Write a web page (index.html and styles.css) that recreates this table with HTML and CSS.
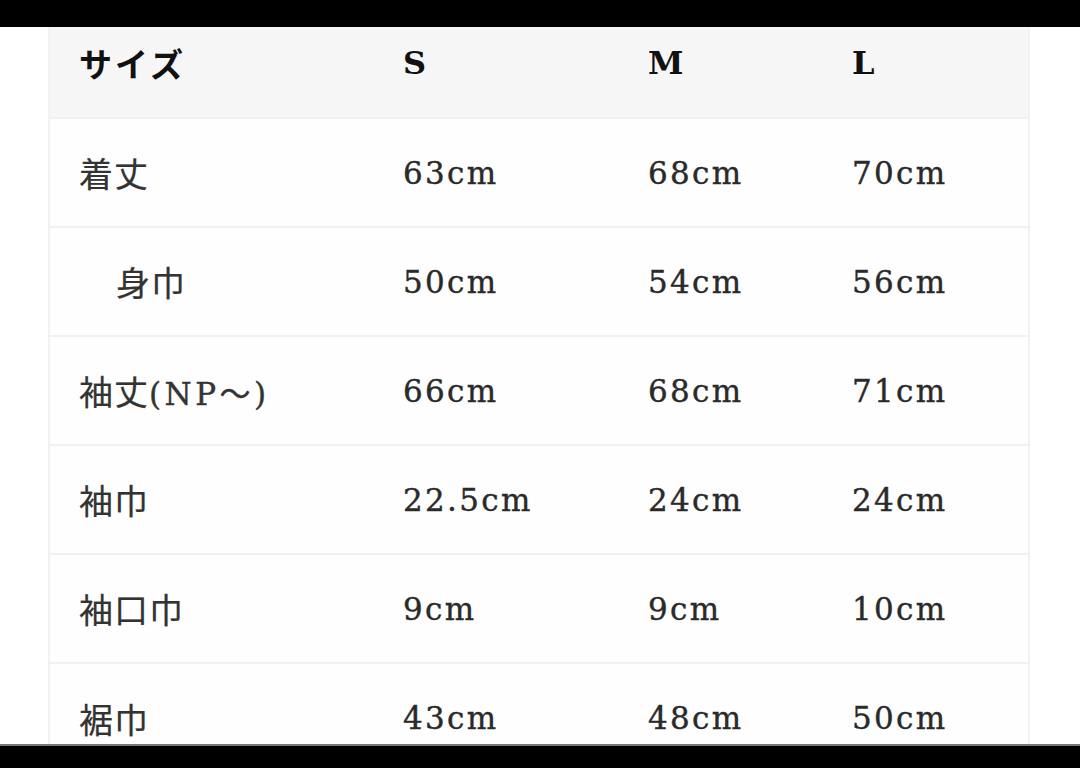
FILE: index.html
```html
<!DOCTYPE html>
<html lang="ja">
<head>
<meta charset="utf-8">
<title>サイズ表</title>
<link rel="stylesheet" href="styles.css">
</head>
<body>
<div class="frame">
  <div class="bar-top"></div>
  <div class="content">
    <table class="size-table">
      <thead>
        <tr class="head-row">
          <th class="c1">サイズ</th><th class="c2">S</th><th class="c3">M</th><th class="c4">L</th>
        </tr>
      </thead>
      <tbody>
        <tr><td class="label">着丈</td><td>63cm</td><td>68cm</td><td>70cm</td></tr>
        <tr><td class="label indent">身巾</td><td>50cm</td><td>54cm</td><td>56cm</td></tr>
        <tr><td class="label">袖丈<span class="lat">(NP～)</span></td><td>66cm</td><td>68cm</td><td>71cm</td></tr>
        <tr><td class="label">袖巾</td><td>22.5cm</td><td>24cm</td><td>24cm</td></tr>
        <tr><td class="label">袖口巾</td><td>9cm</td><td>9cm</td><td>10cm</td></tr>
        <tr class="last"><td class="label">裾巾</td><td>43cm</td><td>48cm</td><td>50cm</td></tr>
      </tbody>
    </table>
  </div>
  <div class="bar-bottom"></div>
</div>
</body>
</html>
```
FILE: styles.css
```css
html, body {
  margin: 0;
  padding: 0;
  background: #fff;
}
.frame {
  width: 1080px;
  height: 768px;
  display: flex;
  flex-direction: column;
  overflow: hidden;
}
.bar-top {
  height: 27px;
  background: #000;
  flex: none;
}
.content {
  flex: 1;
  overflow: hidden;
  padding-left: 48px;
}
.bar-bottom {
  height: 22px;
  flex: none;
  background: #000;
  border-top: 2px solid #777;
}
.size-table {
  width: 982px;
  border-collapse: collapse;
  table-layout: fixed;
  font-family: "DejaVu Serif", "Noto Sans CJK JP", serif;
  color: #2a2a2a;
  border-left: 2px solid #f2f2f2;
  border-right: 2px solid #f2f2f2;
}
.size-table th, .size-table td {
  text-align: left;
  padding: 0 0 0 29px;
  vertical-align: middle;
  white-space: nowrap;
}
.c1 { width: 295px; }
.c2 { width: 216px; }
.c3 { width: 175px; }
.head-row {
  height: 91px;
  background: #f6f6f6;
}
.head-row th {
  font-size: 32px;
  font-weight: bold;
  color: #111;
  padding-bottom: 18px;
}
.head-row th.c1 {
  font-family: "Noto Sans CJK JP", sans-serif;
  font-size: 33px;
  font-weight: bold;
  letter-spacing: 3px;
}
tbody tr {
  height: 109px;
  border-top: 2px solid #f1f1f1;
  background: #fefefe;
}
tbody td {
  font-size: 31px;
  letter-spacing: 2.3px;
  padding-top: 2px;
  -webkit-text-stroke: 0.4px #2a2a2a;
}
td.label {
  font-family: "Noto Sans CJK JP", sans-serif;
  font-size: 34px;
  letter-spacing: 1px;
  color: #333;
  -webkit-text-stroke: 0.2px #333;
}
td.label .lat {
  font-family: "DejaVu Serif", "Noto Sans CJK JP", serif;
  font-size: 31px;
  letter-spacing: 3.5px;
  -webkit-text-stroke: 0.4px #333;
}
td.indent {
  padding-left: 66px;
}
```
